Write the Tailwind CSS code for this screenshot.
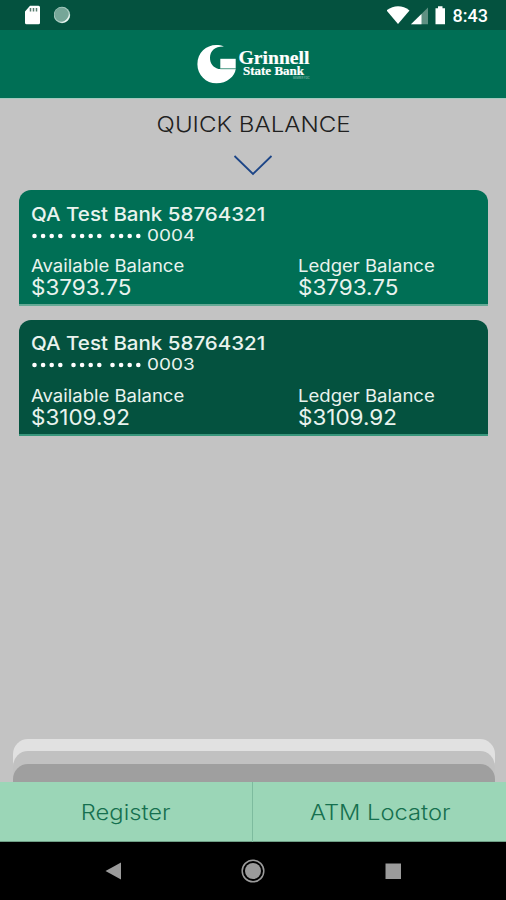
<!DOCTYPE html>
<html lang="en">
<head>
  <meta charset="UTF-8" />
  <meta name="viewport" content="width=device-width, initial-scale=1" />
  <title>Grinnell State Bank - Quick Balance</title>
  <script src="https://cdn.jsdelivr.net/npm/@tailwindcss/browser@4"></script>
</head>
<body class="bg-[#c3c3c3] font-['Inter',sans-serif] h-[900px] w-[506px] flex flex-col overflow-hidden">

  <!-- Status bar -->
  <div class="bg-[#04523f] h-[30px] shrink-0 flex items-center justify-between pl-6 pr-[18px]">
    <div class="flex items-center gap-3">
      <svg class="w-[18px] h-5" viewBox="0 0 18 20">
        <path d="M6 .8h8.5a1.5 1.5 0 0 1 1.5 1.5v15.4a1.5 1.5 0 0 1-1.5 1.5h-12A1.5 1.5 0 0 1 1 17.7V6.5z" fill="#fff" />
        <path d="M6.500 3v3.500M9.500 3v3.500M12.500 3v3.500" stroke="#587d70" stroke-width="1.500" />
      </svg>
      <svg class="w-[18px] h-[18px]" viewBox="0 0 18 18">
        <circle cx="8" cy="9" r="8.200" fill="#a9cbc1" />
        <circle cx="7.500" cy="8.500" r="7" fill="#76a698" />
        <path d="M15.700 7.500a8 8 0 0 1-10 9c5-.2 8.800-4 10-9z" fill="#eef8f4" />
      </svg>
    </div>
    <div class="flex items-center">
      <svg class="w-[59px] h-5 mr-[6px]" viewBox="0 0 59 20">
        <path d="M-.5 5.500C6.500-.1 15.500-.1 22.500 5.500L11 19z" fill="#fff" />
        <path d="M41 2.500V19.300H24z" fill="#5f9082" />
        <path d="M34.500 9v10.300H24z" fill="#fff" />
        <path d="M48.500 3.300h2.500V1.300h4.500v2H58V19.300H48.500z" fill="#fff" />
      </svg>
      <span class="font-['Roboto',sans-serif] font-medium text-[18px] leading-5 text-white pt-[2px] w-[36px] whitespace-nowrap text-right">8:43</span>
    </div>
  </div>

  <!-- Header with bank logo -->
  <header class="bg-[#006f55] h-[69px] shrink-0 border-b border-[#a3c9be] flex justify-center">
    <svg class="w-[116px] h-[68px]" viewBox="0 0 116 68">
      <path d="M29 16.600C16 11.500 2.400 20 2.400 34.200C2.400 45 11 53.300 21.500 53.300C32 53.300 40 46 40.700 38.900H23.500C18 37.500 14.800 33 15 27.500C15.200 21 20 16.300 29 16.600z" fill="#fff" />
      <path d="M25.300 28.800h15.400v9.500H25.300z" fill="#fff" />
      <path d="M25.300 38.800h15.400" stroke="#7fb7a8" stroke-width="1" />
      <g fill="#fff" stroke="#fff" stroke-width=".2" font-family="'Liberation Serif', serif" font-weight="bold">
        <text x="43.500" y="34.300" font-size="19.500" textLength="71" lengthAdjust="spacingAndGlyphs">Grinnell</text>
        <text x="48" y="45.200" font-size="11.800" textLength="61" lengthAdjust="spacingAndGlyphs">State Bank</text>
      </g>
      <text x="98" y="49" fill="#9cc8bc" font-size="3" textLength="16.500" lengthAdjust="spacingAndGlyphs">MEMBER FDIC</text>
    </svg>
  </header>

  <!-- Quick balance -->
  <main class="grow flex flex-col items-center">
    <h1 class="mt-3 ml-[2px] text-[21.5px] leading-[26px] font-light text-[#202020] whitespace-nowrap scale-x-[1.12]">QUICK BALANCE</h1>
    <svg class="mt-[18px] w-10 h-[22px]" viewBox="0 0 40 22" fill="none" stroke="#1c4587" stroke-width="1.800">
      <path d="M1.500 1L20 19L38.500 1" />
    </svg>

    <div class="mt-[13px] ml-[1px] w-[469px] flex flex-col gap-[14px]">
      <section class="bg-[#006f55] text-[#e9f3ee] h-[116px] rounded-t-[12px] border-b-2 border-[#65a995] px-3 pt-[15px] whitespace-nowrap">
        <h2 class="text-[19px] leading-5 font-medium origin-left scale-x-[1.08]">QA Test Bank 58764321</h2>
        <div class="flex items-center h-[21px]">
          <svg class="w-[112px] h-[6px]" viewBox="0 0 112 6" fill="none" stroke="#fff" stroke-width="4.600" stroke-linecap="round">
            <path d="M3.500 3H30" stroke-dasharray="0 8.600" />
            <path d="M42.500 3H69" stroke-dasharray="0 8.600" />
            <path d="M81.500 3H108" stroke-dasharray="0 8.600" />
          </svg>
          <span class="ml-1 text-[16.5px] origin-left scale-x-[1.15]">0004</span>
        </div>
        <div class="flex mt-[10px]">
          <div class="w-[267px] origin-left">
            <p class="text-[17px] leading-5 origin-left scale-x-[1.09]">Available Balance</p>
            <p class="text-[21px] leading-[23px] origin-left scale-x-[1.07]">$3793.75</p>
          </div>
          <div>
            <p class="text-[17px] leading-5 origin-left scale-x-[1.09]">Ledger Balance</p>
            <p class="text-[21px] leading-[23px] origin-left scale-x-[1.07]">$3793.75</p>
          </div>
        </div>
      </section>

      <section class="bg-[#04523f] text-[#e9f3ee] h-[116px] rounded-t-[12px] border-b-2 border-[#39967c] px-3 pt-[14px] whitespace-nowrap">
        <h2 class="text-[19px] leading-5 font-medium origin-left scale-x-[1.08]">QA Test Bank 58764321</h2>
        <div class="flex items-center h-[21px]">
          <svg class="w-[112px] h-[6px]" viewBox="0 0 112 6" fill="none" stroke="#fff" stroke-width="4.600" stroke-linecap="round">
            <path d="M3.500 3H30" stroke-dasharray="0 8.600" />
            <path d="M42.500 3H69" stroke-dasharray="0 8.600" />
            <path d="M81.500 3H108" stroke-dasharray="0 8.600" />
          </svg>
          <span class="ml-1 text-[16.5px] origin-left scale-x-[1.15]">0003</span>
        </div>
        <div class="flex mt-[11px]">
          <div class="w-[267px]">
            <p class="text-[17px] leading-5 origin-left scale-x-[1.09]">Available Balance</p>
            <p class="text-[21px] leading-[23px] origin-left scale-x-[1.07]">$3109.92</p>
          </div>
          <div>
            <p class="text-[17px] leading-5 origin-left scale-x-[1.09]">Ledger Balance</p>
            <p class="text-[21px] leading-[23px] origin-left scale-x-[1.07]">$3109.92</p>
          </div>
        </div>
      </section>
    </div>

    <!-- Stacked card edges -->
    <div class="mt-auto ml-[1px] w-[482px] h-[43px] overflow-hidden bg-[#e1e1e1] rounded-t-[15px]">
      <div class="mt-3 h-[31px] bg-[#c1c1c1] rounded-t-[15px] overflow-hidden">
        <div class="mt-[13px] h-[18px] bg-[#9f9f9f] rounded-t-[15px]"></div>
      </div>
    </div>
  </main>

  <!-- Bottom tabs -->
  <div class="bg-[#9bd6b7] text-[#16704f] h-[60px] shrink-0 grid grid-cols-2 border-b border-[#6f9f86] text-[21px] text-center leading-[61px] whitespace-nowrap font-light">
    <a href="#" class="border-r border-[#7dbb9e]"><span class="inline-block scale-x-[1.13]">Register</span></a>
    <a href="#" class="pl-[2px]"><span class="inline-block scale-x-[1.13]">ATM Locator</span></a>
  </div>

  <!-- Android navigation -->
  <nav class="bg-black h-[58px] shrink-0 flex items-center justify-center">
    <svg class="w-[506px] h-[58px]" viewBox="0 0 506 58">
      <path d="M105.500 29L121 20.500V37.500z" fill="#9b9b9b" />
      <circle cx="253" cy="29" r="10.800" fill="none" stroke="#9b9b9b" stroke-width="1.500" />
      <circle cx="253" cy="29" r="8" fill="#9b9b9b" />
      <path d="M385.500 21.500h15.500v15.500h-15.500z" fill="#9b9b9b" />
    </svg>
  </nav>

</body>
</html>
